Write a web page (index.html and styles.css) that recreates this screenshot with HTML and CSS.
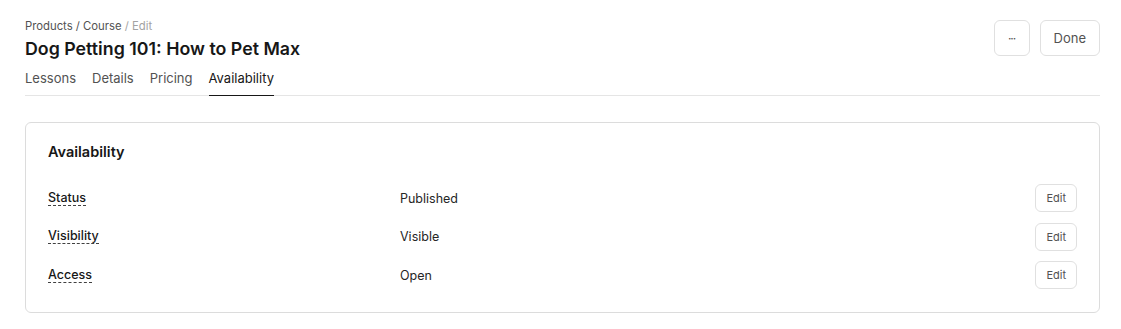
FILE: index.html
```html
<!DOCTYPE html>
<html>
<head>
<meta charset="utf-8">
<title>Dog Petting 101: How to Pet Max</title>
<link rel="stylesheet" href="styles.css">
</head>
<body>
<div class="page">
    <div class="header">
        <div class="header_left">
            <div class="crumbs">Products / Course <span class="crumb_muted">/ Edit</span></div>
            <h1 class="title">Dog Petting 101: How to Pet Max</h1>
        </div>
        <div class="header_actions">
            <button class="btn btn_more">&middot;&middot;&middot;</button>
            <button class="btn">Done</button>
        </div>
    </div>
    <div class="tabs">
        <a class="tab">Lessons</a>
        <a class="tab">Details</a>
        <a class="tab">Pricing</a>
        <a class="tab active">Availability</a>
    </div>
    <div class="card">
        <h2 class="card_title">Availability</h2>
        <div class="rows">
            <div class="row">
                <span class="row_label">Status</span>
                <span class="row_value">Published</span>
                <button class="btn btn_small">Edit</button>
            </div>
            <div class="row">
                <span class="row_label">Visibility</span>
                <span class="row_value">Visible</span>
                <button class="btn btn_small">Edit</button>
            </div>
            <div class="row">
                <span class="row_label">Access</span>
                <span class="row_value">Open</span>
                <button class="btn btn_small">Edit</button>
            </div>
        </div>
    </div>
</div>
</body>
</html>
```

FILE: styles.css
```css
body {
    margin: 0;
    font-family: Inter, "Noto Sans", sans-serif;
    color: #1a1a1a;
    background: #fff;
}
.page {
    padding: 20px 21px 0 25px;
}
.header {
    display: flex;
    justify-content: space-between;
    align-items: flex-start;
}
.crumbs {
    font-size: 11.3px;
    line-height: 13px;
    color: #525252;
}
.crumb_muted {
    color: #a3a3a3;
}
.title {
    margin: 4px 0 0;
    font-size: 17.8px;
    line-height: 23px;
    font-weight: 600;
    color: #171717;
}
.header_actions {
    display: flex;
    gap: 10px;
}
.btn {
    font-family: inherit;
    background: #fff;
    border: 1px solid #e0e0e0;
    border-radius: 6px;
    height: 36px;
    padding: 0 13px;
    font-size: 13px;
    color: #525252;
    cursor: pointer;
}
.btn_more {
    width: 36px;
    padding: 0;
    font-size: 12px;
    letter-spacing: -1px;
}
.tabs {
    display: flex;
    gap: 16px;
    margin-top: 8px;
    border-bottom: 1px solid #e5e5e5;
}
.tab {
    font-size: 13px;
    line-height: 16px;
    padding: 2px 0 9px;
    color: #525252;
    border-bottom: 1px solid transparent;
    margin-bottom: -1px;
}
.tab.active {
    color: #171717;
    border-bottom-color: #171717;
}
.card {
    margin-top: 26px;
    border: 1px solid #dcdcdc;
    border-radius: 6px;
    padding: 19px 22px 23px;
}
.card_title {
    margin: 0;
    font-size: 14.5px;
    line-height: 20px;
    font-weight: 600;
    color: #171717;
}
.rows {
    margin-top: 22px;
    display: flex;
    flex-direction: column;
    gap: 10.5px;
}
.row {
    display: grid;
    grid-template-columns: 352px 1fr auto;
    align-items: center;
    font-size: 12.5px;
    color: #262626;
}
.row_label {
    justify-self: start;
    font-weight: 500;
    color: #171717;
    border-bottom: 1px dashed #404040;
    line-height: 14px;
}
.btn_small {
    height: 28px;
    padding: 0 10px;
    font-size: 11px;
}
```
